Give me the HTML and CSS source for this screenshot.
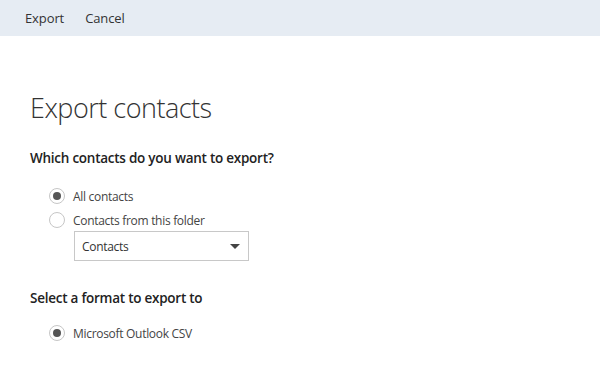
FILE: index.html
```html
<!DOCTYPE html>
<html lang="en">
<head>
  <title>Export contacts</title>
  <link rel="stylesheet" href="styles.css">
</head>
<body>

  <div class="toolbar">
    <button class="tool">Export</button>
    <button class="tool">Cancel</button>
  </div>

  <div class="page">
    <h1 class="title">Export contacts</h1>

    <h2 class="question">Which contacts do you want to export?</h2>
    <div class="options">
      <label class="option"><span class="radio checked"></span>All contacts</label>
      <label class="option"><span class="radio"></span>Contacts from this folder</label>
      <div class="select">
        <span>Contacts</span>
        <span class="arrow"></span>
      </div>
    </div>

    <h2 class="question format">Select a format to export to</h2>
    <div class="options tight">
      <label class="option"><span class="radio checked"></span>Microsoft Outlook CSV</label>
    </div>
  </div>

</body>
</html>
```

FILE: styles.css
```css
body {
  margin: 0;
  background: #fff;
  color: #333;
  font-family: "Open Sans", "Noto Sans", sans-serif;
}

.toolbar {
  display: flex;
  align-items: center;
  height: 36px;
  padding-left: 17px;
  background-color: #e6ecf3;
}

.tool {
  border: none;
  background: none;
  padding: 0 8px;
  margin-right: 5px;
  font-family: inherit;
  font-size: 13px;
  letter-spacing: -0.1px;
  color: #333;
}

.page {
  padding-left: 30px;
}

.title {
  margin: 54px 0 0;
  font-size: 27px;
  font-weight: 300;
  letter-spacing: -0.5px;
  line-height: 36px;
}

.question {
  margin: 22px 0 0;
  font-size: 13.5px;
  font-weight: 600;
  letter-spacing: -0.25px;
  line-height: 20px;
  color: #222;
}

.question.format {
  margin-top: 27px;
}

.options {
  display: flex;
  flex-direction: column;
  padding-left: 19px;
  margin-top: 16px;
}

.options.tight {
  margin-top: 13px;
}

.option {
  display: flex;
  align-items: center;
  height: 24px;
  font-size: 12px;
  letter-spacing: -0.3px;
  color: #444;
}

.radio {
  box-sizing: border-box;
  width: 16px;
  height: 16px;
  margin-right: 8px;
  border: 1px solid #c6c6c6;
  border-radius: 50%;
  display: flex;
  justify-content: center;
  align-items: center;
}

.radio.checked::after {
  content: "";
  width: 8px;
  height: 8px;
  border-radius: 50%;
  background-color: #555;
}

.select {
  box-sizing: border-box;
  display: flex;
  justify-content: space-between;
  align-items: center;
  width: 175px;
  height: 30px;
  margin: -1px 0 0 25px;
  padding: 0 8px 0 7px;
  border: 1px solid #c8c8c8;
  font-size: 12px;
  letter-spacing: -0.3px;
  color: #333;
}

.arrow {
  width: 0;
  height: 0;
  border-left: 5px solid transparent;
  border-right: 5px solid transparent;
  border-top: 5px solid #444;
}
```
